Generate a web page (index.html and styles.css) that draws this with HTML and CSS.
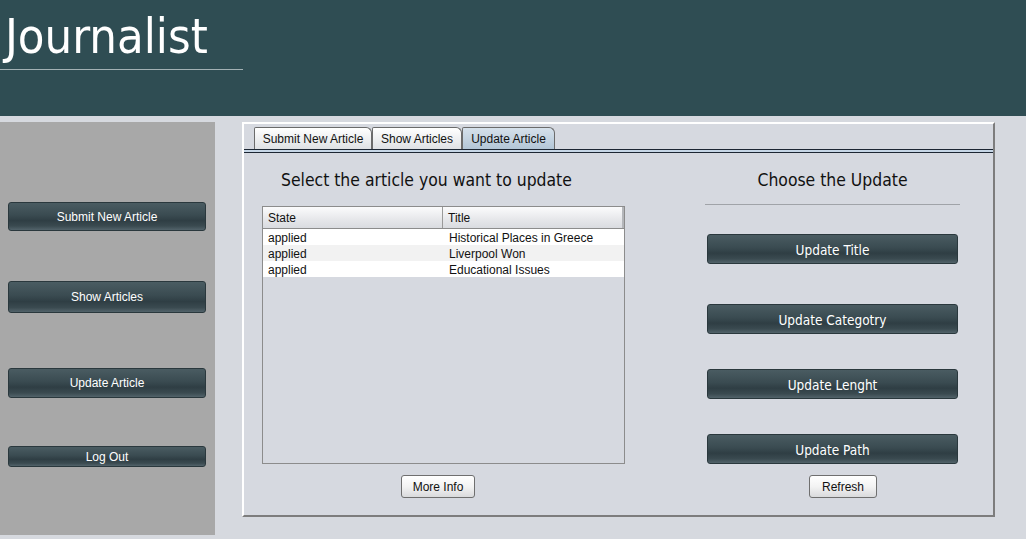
FILE: index.html
```html
<!DOCTYPE html>
<html>
<head>
<meta charset="utf-8">
<link rel="stylesheet" href="styles.css">
</head>
<body>
<header class="header">
  <h1 class="title">Journalist</h1>
  <div class="title-rule"></div>
</header>
<div class="main">
  <aside class="sidebar">
    <button class="side-btn side-btn--submit">Submit New Article</button>
    <button class="side-btn side-btn--show">Show Articles</button>
    <button class="side-btn side-btn--update">Update Article</button>
    <button class="side-btn side-btn--logout">Log Out</button>
  </aside>
  <section class="panel">
    <div class="tabs">
      <div class="tab tab--submit">Submit New Article</div>
      <div class="tab tab--show">Show Articles</div>
      <div class="tab tab--active">Update Article</div>
    </div>
    <div class="tab-line"></div>
    <div class="content">
      <div class="left">
        <h2 class="heading heading--left">Select the article you want to update</h2>
        <div class="table">
          <div class="thead">
            <div class="th th--state">State</div>
            <div class="th th--title">Title</div>
          </div>
          <div class="tr"><div class="td td--state">applied</div><div class="td">Historical Places in Greece</div></div>
          <div class="tr tr--alt"><div class="td td--state">applied</div><div class="td">Liverpool Won</div></div>
          <div class="tr"><div class="td td--state">applied</div><div class="td">Educational Issues</div></div>
        </div>
        <button class="small-btn small-btn--more">More Info</button>
      </div>
      <div class="right">
        <h2 class="heading heading--right">Choose the Update</h2>
        <div class="rule"></div>
        <button class="up-btn up-btn--title">Update Title</button>
        <button class="up-btn up-btn--cat">Update Categotry</button>
        <button class="up-btn up-btn--len">Update Lenght</button>
        <button class="up-btn up-btn--path">Update Path</button>
        <button class="small-btn small-btn--refresh">Refresh</button>
      </div>
    </div>
  </section>
</div>
</body>
</html>
```

FILE: styles.css
```css
* { box-sizing: border-box; }
html, body { margin: 0; padding: 0; }
body {
  width: 1026px;
  height: 539px;
  overflow: hidden;
  background: #d6d9df;
  font-family: "Liberation Sans", Arial, sans-serif;
}
button { font-family: inherit; margin: 0; padding: 0; cursor: default; }

.header {
  height: 116px;
  background: #2f4d53;
  padding-top: 9px;
}
.title {
  margin: 0 0 0 5px;
  font-family: "DejaVu Sans Condensed", "DejaVu Sans", sans-serif;
  font-weight: normal;
  font-size: 48.5px;
  line-height: 54px;
  color: #ffffff;
}
.title-rule {
  margin-top: 6px;
  width: 243px;
  height: 1px;
  background: #a3b1b4;
}

.main {
  display: flex;
  margin-top: 6px;
  align-items: flex-start;
}
.sidebar {
  width: 215px;
  height: 413px;
  background: #a8a8a8;
  display: flex;
  flex-direction: column;
  padding-left: 8px;
  padding-top: 80px;
}
.side-btn, .up-btn {
  border: 1px solid #2a383d;
  border-radius: 3px;
  color: #ffffff;
  background: linear-gradient(#4a5c62 0%, #3a4b51 45%, #2f3e44 65%, #3a4a50 85%, #52636a 100%);
}
.side-btn {
  width: 198px;
  font-size: 12px;
}
.side-btn--submit { height: 29px; }
.side-btn--show { height: 32px; margin-top: 50px; }
.side-btn--update { height: 30px; margin-top: 55px; }
.side-btn--logout { height: 21px; margin-top: 48px; }

.panel {
  margin-left: 27px;
  width: 753px;
  height: 395px;
  background: #d6d9e0;
  border-top: 2px solid #ffffff;
  border-left: 2px solid #ffffff;
  border-right: 2px solid #7d7d7d;
  border-bottom: 2px solid #7d7d7d;
}
.tabs {
  display: flex;
  padding-left: 10px;
  padding-top: 3px;
  height: 25px;
}
.tab {
  height: 22px;
  font-size: 12px;
  line-height: 22px;
  text-align: center;
  color: #111;
  border: 1px solid #6b6b6b;
  border-bottom: none;
  border-radius: 2px 6px 0 0;
  background: linear-gradient(#ffffff, #dfe1e4);
}
.tab--submit { width: 118px; }
.tab--show { width: 90px; }
.tab--active {
  width: 93px;
  background: linear-gradient(#d6e1eb, #b3c6d7);
}
.tab-line {
  height: 4px;
  border-top: 1px solid #1c2633;
  border-bottom: 1px solid #1c2633;
  background: #c6d6e6;
}

.content {
  display: flex;
  padding-left: 18px;
}
.left {
  width: 363px;
  display: flex;
  flex-direction: column;
}
.heading {
  margin: 0;
  font-family: "DejaVu Sans Condensed", "DejaVu Sans", sans-serif;
  font-weight: normal;
  font-size: 17.4px;
  line-height: 22px;
  color: #111;
}
.heading--left {
  margin-top: 16px;
  padding-left: 19px;
}
.table {
  margin-top: 15px;
  height: 258px;
  border: 1px solid #8c8c8c;
  background: #d6d9e0;
  font-size: 12px;
  color: #111;
}
.thead {
  display: flex;
  height: 22px;
  background: linear-gradient(#fbfbfc, #e6e7ea 60%, #d9dbe0);
  border-bottom: 1px solid #8c8c8c;
}
.th {
  line-height: 22px;
  padding-left: 5px;
}
.th--state {
  width: 180px;
  border-right: 1px solid #9a9a9a;
}
.th--title { flex: 1; border-right: 2px solid #b4b6ba; }
.tr {
  display: flex;
  height: 16px;
  line-height: 18px;
  background: #ffffff;
}
.tr--alt { background: #f2f2f2; }
.td { padding-left: 5px; }
.td--state { width: 181px; }

.small-btn {
  height: 23px;
  font-size: 12px;
  color: #111;
  border: 1px solid #6f6f6f;
  border-radius: 3px;
  background: linear-gradient(#ffffff, #f3f3f3 50%, #d9dadc);
}
.small-btn--more {
  margin-top: 11px;
  margin-left: 139px;
  width: 74px;
}

.right {
  margin-left: 80px;
  width: 255px;
  display: flex;
  flex-direction: column;
}
.heading--right {
  margin-top: 16px;
  text-align: center;
}
.rule {
  margin-top: 13px;
  height: 1px;
  background: #a0a3a8;
}
.up-btn {
  margin-left: 2px;
  width: 251px;
  height: 30px;
  padding-top: 2px;
  font-family: "DejaVu Sans Condensed", "DejaVu Sans", sans-serif;
  font-size: 13.5px;
}
.up-btn--title { margin-top: 29px; }
.up-btn--cat { margin-top: 40px; }
.up-btn--len { margin-top: 35px; }
.up-btn--path { margin-top: 35px; }
.small-btn--refresh {
  margin-top: 11px;
  margin-left: 104px;
  width: 68px;
}
```
